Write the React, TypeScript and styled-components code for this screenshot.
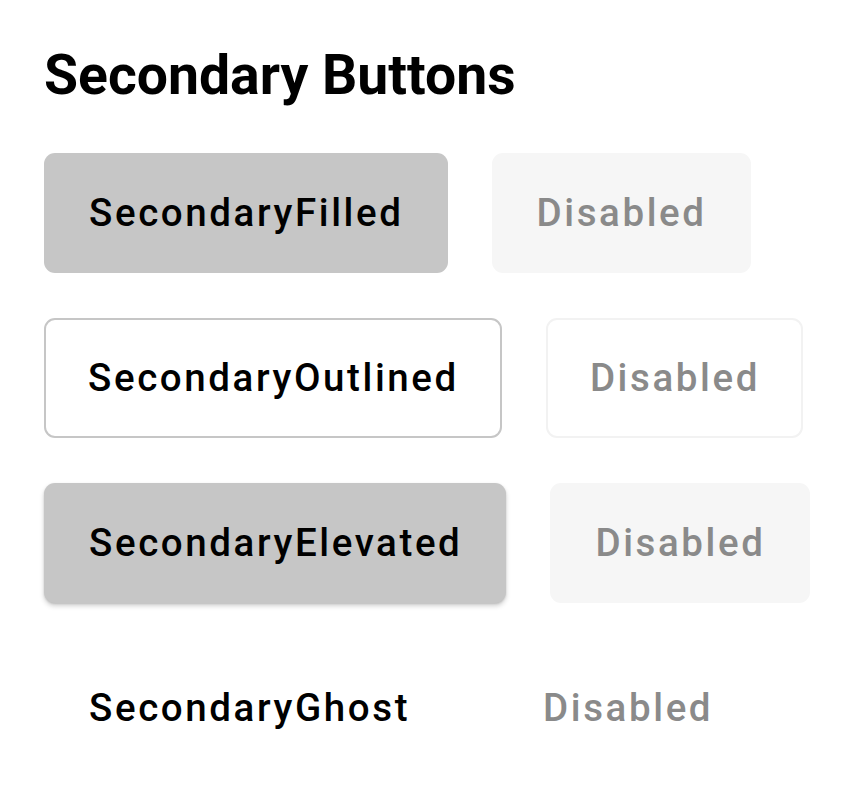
import React from "react";
import styled, { createGlobalStyle, css } from "styled-components";

const Global = createGlobalStyle`
  html, body { margin: 0; padding: 0; background: #ffffff; }
  body { font-family: Roboto, "Noto Sans", Arial, sans-serif; }
`;

const Page = styled.div`
  padding: 44px;
  display: flex;
  flex-direction: column;
  gap: 44px;
`;

const Title = styled.h1`
  margin: 0;
  font-family: Roboto, Arial, sans-serif;
  font-weight: 700;
  font-size: 55.3px;
  line-height: 64.5px;
  color: #000;
`;

const Rows = styled.div`
  display: flex;
  flex-direction: column;
  gap: 45px;
`;

const Row = styled.div`
  display: flex;
  gap: 44px;
  align-items: center;
`;

type Variant = "filled" | "outlined" | "elevated" | "ghost";

const Button = styled.button<{ $variant: Variant; $disabled?: boolean }>`
  box-sizing: border-box;
  height: 120px;
  padding: 0 44px 0 45px;
  border-radius: 11px;
  border: none;
  display: inline-flex;
  align-items: center;
  justify-content: center;
  font-family: Roboto, Arial, sans-serif;
  font-weight: 500;
  font-size: 38.5px;
  letter-spacing: 2.6px;
  color: ${(p) => (p.$disabled ? "#8a8a8a" : "#000")};
  background: transparent;
  cursor: ${(p) => (p.$disabled ? "default" : "pointer")};

  ${(p) =>
    p.$variant === "filled" &&
    css`
      background: ${p.$disabled ? "#f6f6f6" : "#c6c6c6"};
    `}
  ${(p) =>
    p.$variant === "outlined" &&
    css`
      background: #fff;
      padding: 0 41px 0 42px;
      border: 2.75px solid ${p.$disabled ? "#f2f2f2" : "#c6c6c6"};
    `}
  ${(p) =>
    p.$variant === "elevated" &&
    css`
      background: ${p.$disabled ? "#f6f6f6" : "#c6c6c6"};
      box-shadow: ${p.$disabled
        ? "none"
        : "0 3px 5px rgba(0,0,0,0.18), 0 1px 2px rgba(0,0,0,0.12)"};
    `}
`;

const rows: { variant: Variant; label: string }[] = [
  { variant: "filled", label: "SecondaryFilled" },
  { variant: "outlined", label: "SecondaryOutlined" },
  { variant: "elevated", label: "SecondaryElevated" },
  { variant: "ghost", label: "SecondaryGhost" },
];

export default function App() {
  return (
    <>
      <Global />
      <Page>
        <Title>Secondary Buttons</Title>
        <Rows>
          {rows.map((r) => (
            <Row key={r.variant}>
              <Button $variant={r.variant}>{r.label}</Button>
              <Button $variant={r.variant} $disabled>
                Disabled
              </Button>
            </Row>
          ))}
        </Rows>
      </Page>
    </>
  );
}
